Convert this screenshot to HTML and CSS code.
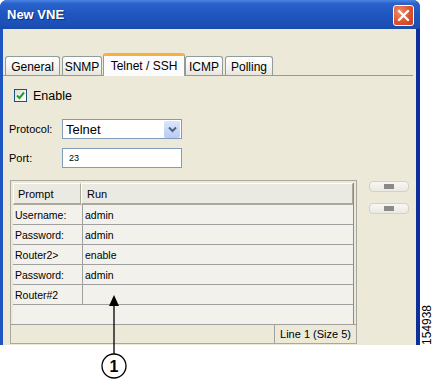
FILE: index.html
```html
<!DOCTYPE html>
<html lang="en">
<head>
    <meta charset="UTF-8">
    <title>New VNE</title>
    <link rel="stylesheet" href="styles.css">
</head>
<body>
<div class="stage">
    <!--Dialog window-->
    <div class="window">
        <div class="titlebar">
            <span class="title">New VNE</span>
            <span class="close">
                <svg width="13" height="13" viewBox="0 0 13 13"><path d="M2 2 L11 11 M11 2 L2 11" stroke="#fff" stroke-width="2.4" stroke-linecap="round"/></svg>
            </span>
        </div>
        <div class="client">
            <!--Tabs-->
            <div class="tabs">
                <span class="tab w-general">General</span>
                <span class="tab w-snmp">SNMP</span>
                <span class="tab selected">Telnet / SSH</span>
                <span class="tab w-icmp">ICMP</span>
                <span class="tab w-polling">Polling</span>
            </div>
            <div class="panel">
                <div class="check-row">
                    <span class="checkbox">
                        <svg width="9" height="9" viewBox="0 0 9 9"><path d="M1 4.5 L3.5 7 L8 1.5" fill="none" stroke="#21a121" stroke-width="2"/></svg>
                    </span>
                    <span>Enable</span>
                </div>
                <div class="field protocol">
                    <span class="label">Protocol:</span>
                    <span class="select">
                        <span class="select-text">Telnet</span>
                        <span class="drop">
                            <svg width="9" height="7" viewBox="0 0 9 7"><path d="M1 1.5 L4.5 5 L8 1.5" fill="none" stroke="#4d6185" stroke-width="2"/></svg>
                        </span>
                    </span>
                </div>
                <div class="field port">
                    <span class="label">Port:</span>
                    <span class="input">23</span>
                </div>
                <!--Prompt table-->
                <div class="table-area">
                    <div class="grid-wrap">
                        <div class="grid">
                            <div class="row head">
                                <span class="c1">Prompt</span>
                                <span class="c2">Run</span>
                            </div>
                            <div class="row"><span class="c1">Username:</span><span class="c2">admin</span></div>
                            <div class="row"><span class="c1">Password:</span><span class="c2">admin</span></div>
                            <div class="row"><span class="c1">Router2&gt;</span><span class="c2">enable</span></div>
                            <div class="row"><span class="c1">Password:</span><span class="c2">admin</span></div>
                            <div class="row"><span class="c1">Router#2</span><span class="c2"></span></div>
                            <div class="filler"></div>
                        </div>
                        <div class="status">
                            <span class="status-cell">Line 1 (Size 5)</span>
                        </div>
                    </div>
                    <div class="side-buttons">
                        <span class="pill"><span class="pill-mark"></span></span>
                        <span class="pill"><span class="pill-mark"></span></span>
                    </div>
                </div>
            </div>
        </div>
    </div>

    <!--Callout-->
    <svg class="callout" width="30" height="88" viewBox="0 0 30 88">
        <path d="M14 2 L19 13 L9 13 Z" fill="#000"/>
        <line x1="14" y1="12" x2="14" y2="61" stroke="#000" stroke-width="1.3"/>
        <circle cx="14" cy="73" r="12" fill="#fff" stroke="#000" stroke-width="1.3"/>
        <text x="14" y="79" text-anchor="middle" font-family="Liberation Sans, Arial, sans-serif" font-weight="bold" font-size="16">1</text>
    </svg>
    <span class="fig-number">154938</span>
</div>
</body>
</html>
```

FILE: styles.css
```css
body {
    margin: 0;
    background: #fff;
    font-family: "Liberation Sans", Arial, sans-serif;
    color: #000;
}
.stage {
    position: relative;
    width: 433px;
    height: 381px;
    overflow: hidden;
}
.window {
    width: 420px;
    height: 345px;
    background: linear-gradient(90deg, #1f55c0 0%, #1c4fb6 90%, #0c2e96 100%);
    border-radius: 7px 7px 0 0;
    padding: 0 4px 0 3px;
    box-sizing: border-box;
    display: flex;
    flex-direction: column;
}
.titlebar {
    height: 29px;
    margin: 0 -4px 0 -3px;
    padding: 0 6px 0 7px;
    border-radius: 7px 7px 0 0;
    background: linear-gradient(180deg, #4a86e4 0%, #2a62cc 12%, #1f55be 50%, #1c50b8 85%, #1a49a8 100%);
    display: flex;
    align-items: center;
    justify-content: space-between;
}
.title {
    color: #fff;
    font-weight: bold;
    font-size: 13px;
    text-shadow: 1px 1px 0 #0f2f78;
    margin-top: -1px;
}
.close {
    width: 19px;
    height: 19px;
    margin-top: 1px;
    border: 1px solid #fff;
    border-radius: 3px;
    background: radial-gradient(circle at 30% 30%, #f08c68, #d9502c 60%, #c23f1e);
    display: flex;
    align-items: center;
    justify-content: center;
}
.client {
    flex: 1;
    background: #ece9d8;
    font-size: 12px;
}
.tabs {
    display: flex;
    align-items: flex-end;
    gap: 2px;
    margin: 24px 3px 0 0;
    padding-left: 2px;
    height: 22px;
    border-bottom: 1px solid #919b9c;
}
.tab {
    height: 19px;
    box-sizing: border-box;
    border: 1px solid #919b9c;
    border-bottom: none;
    border-radius: 3px 3px 0 0;
    background: linear-gradient(180deg, #fff 0%, #f3f3ef 60%, #e6e5de 100%);
    display: flex;
    align-items: center;
    justify-content: center;
    font-size: 12px;
    padding-top: 1px;
}
.w-general { width: 55px; }
.w-snmp { width: 40px; }
.w-icmp { width: 38px; }
.w-polling { width: 48px; }
.tab.selected {
    width: 82px;
    height: 23px;
    margin: 0 -2px -1px -1px;
    border-top: 3px solid #f8b03c;
    background: #fcfcfe;
    padding-top: 0;
    position: relative;
}
.panel {
    padding-left: 6px;
}
.check-row {
    display: flex;
    align-items: center;
    gap: 6px;
    margin: 13px 0 0 5px;
    height: 13px;
    font-size: 12.5px;
}
.checkbox {
    width: 13px;
    height: 13px;
    box-sizing: border-box;
    border: 1px solid #1c5180;
    background: linear-gradient(135deg, #dcdcd7, #fff);
    display: flex;
    align-items: center;
    justify-content: center;
}
.field {
    display: flex;
    align-items: center;
    height: 20px;
}
.protocol { margin-top: 17px; }
.port { margin-top: 9px; }
.label {
    width: 53px;
    font-size: 11px;
}
.select, .input {
    width: 120px;
    height: 20px;
    box-sizing: border-box;
    border: 1px solid #7f9db9;
    background: #fff;
    display: flex;
    align-items: center;
}
.select-text {
    flex: 1;
    padding-left: 3px;
    font-size: 13px;
}
.drop {
    width: 16px;
    height: 17px;
    margin-right: 1px;
    border-radius: 2px;
    background: linear-gradient(180deg, #dbe6fd, #b8cbf3);
    display: flex;
    align-items: center;
    justify-content: center;
}
.input {
    padding-left: 6px;
    font-size: 9px;
}
.table-area {
    display: flex;
    align-items: flex-start;
    gap: 12px;
    margin: 12px 0 0 1px;
}
.grid-wrap {
    width: 347px;
    border: 1px solid #a8a8a0;
    box-sizing: border-box;
}
.grid {
    margin: 2px 2px 0 2px;
    border-right: 1px solid #8c8c88;
    background: #f3f1ec;
}
.row {
    display: flex;
    height: 20px;
    border-bottom: 1px solid #a0a0a0;
    box-sizing: border-box;
    font-size: 10.5px;
}
.row span {
    display: flex;
    align-items: center;
    padding-left: 2px;
}
.row .c1 {
    width: 67px;
    border-right: 1px solid #a0a0a0;
}
.row .c2 {
    flex: 1;
}
.row.head {
    height: 22px;
    border: none;
    background: #ebeae2;
    font-size: 11px;
}
.row.head span {
    border-top: 1px solid #fff;
    border-left: 1px solid #fff;
    border-right: 1px solid #aca899;
    border-bottom: 2px solid #aca899;
    padding-left: 4px;
}
.row.head .c1 { width: 68px; box-sizing: border-box; }
.row.head .c2 { padding-left: 5px; }
.filler {
    height: 19px;
}
.status {
    height: 18px;
    border-top: 1px solid #a0a0a0;
    display: flex;
    justify-content: flex-end;
}
.status-cell {
    width: 81px;
    border-left: 1px solid #a0a0a0;
    display: flex;
    align-items: center;
    justify-content: center;
    font-size: 11px;
}
.side-buttons {
    display: flex;
    flex-direction: column;
    gap: 11px;
    margin-top: 1px;
}
.pill {
    width: 40px;
    height: 11px;
    box-sizing: border-box;
    border: 1px solid #d4d2c8;
    border-radius: 4px;
    background: linear-gradient(180deg, #f8f7f3, #ebe9e0);
    display: flex;
    align-items: center;
    justify-content: center;
}
.pill-mark {
    width: 10px;
    height: 5px;
    background: #8a8a8a;
}
.callout {
    position: absolute;
    left: 100px;
    top: 293px;
}
.fig-number {
    position: absolute;
    left: 421px;
    top: 305px;
    writing-mode: vertical-rl;
    transform: rotate(180deg);
    font-size: 12px;
    line-height: 12px;
}
```
